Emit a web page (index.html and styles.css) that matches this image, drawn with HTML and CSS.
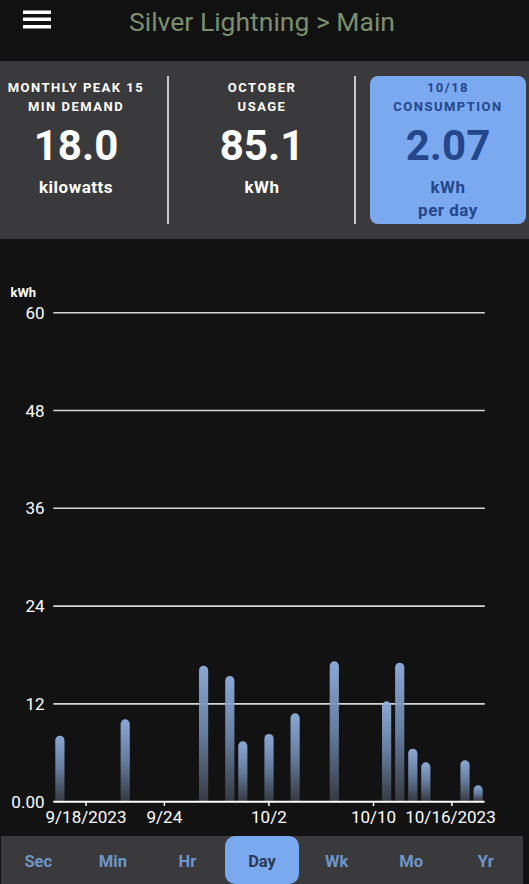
FILE: index.html
```html
<!DOCTYPE html>
<html lang="en">
<head>
<meta charset="utf-8">
<title>Silver Lightning &gt; Main</title>
<link rel="stylesheet" href="styles.css">
</head>
<body>
<div class="app">
  <header class="topbar">
    <svg class="menu" width="28" height="19" viewBox="0 0 28 19" aria-label="Menu">
      <rect x="0" y="0.5" width="28" height="3.5" fill="#ffffff"/>
      <rect x="0" y="7.5" width="28" height="3.5" fill="#ffffff"/>
      <rect x="0" y="15" width="28" height="3.5" fill="#ffffff"/>
    </svg>
    <h1 class="title">Silver Lightning &gt; Main</h1>
  </header>

  <section class="stats">
    <div class="card">
      <div class="label">MONTHLY PEAK 15<br>MIN DEMAND</div>
      <div class="value">18.0</div>
      <div class="unit">kilowatts</div>
    </div>
    <div class="divider"></div>
    <div class="card">
      <div class="label">OCTOBER<br>USAGE</div>
      <div class="value">85.1</div>
      <div class="unit">kWh</div>
    </div>
    <div class="divider"></div>
    <div class="card card-active">
      <div class="label">10/18<br>CONSUMPTION</div>
      <div class="value">2.07</div>
      <div class="unit">kWh<br>per day</div>
    </div>
  </section>

  <section class="chart">
    <svg width="529" height="597" viewBox="0 0 529 597">
      <defs>
        <linearGradient id="barGrad" x1="0" y1="0" x2="0" y2="1">
          <stop offset="0" stop-color="#95b5e6"/>
          <stop offset="0.5" stop-color="#6d86ab"/>
          <stop offset="1" stop-color="#393e47"/>
        </linearGradient>
      </defs>
      <text class="axis-title" x="10.5" y="57.5">kWh</text>
      <g class="grid">
        <line x1="53.3" y1="73.7" x2="484.8" y2="73.7"/>
        <line x1="53.3" y1="171.5" x2="484.8" y2="171.5"/>
        <line x1="53.3" y1="269.3" x2="484.8" y2="269.3"/>
        <line x1="53.3" y1="367.1" x2="484.8" y2="367.1"/>
        <line x1="53.3" y1="464.9" x2="484.8" y2="464.9"/>
      </g>
      <g class="ylabels">
        <text x="44.5" y="79.8">60</text>
        <text x="44.5" y="177.6">48</text>
        <text x="44.5" y="275.4">36</text>
        <text x="44.5" y="373.2">24</text>
        <text x="44.5" y="471">12</text>
        <text x="44.5" y="568.5">0.00</text>
      </g>
      <g class="bars" fill="url(#barGrad)">
        <path d="M55.3 562V501.3A4.6 4.6 0 0 1 64.5 501.3V562Z"/>
        <path d="M120.6 562V484.9A4.6 4.6 0 0 1 129.8 484.9V562Z"/>
        <path d="M199 562V431.3A4.6 4.6 0 0 1 208.2 431.3V562Z"/>
        <path d="M225.2 562V441.6A4.6 4.6 0 0 1 234.4 441.6V562Z"/>
        <path d="M238.2 562V506.9A4.6 4.6 0 0 1 247.4 506.9V562Z"/>
        <path d="M264.4 562V499.6A4.6 4.6 0 0 1 273.6 499.6V562Z"/>
        <path d="M290.5 562V478.9A4.6 4.6 0 0 1 299.7 478.9V562Z"/>
        <path d="M329.7 562V426.9A4.6 4.6 0 0 1 338.9 426.9V562Z"/>
        <path d="M382 562V466.9A4.6 4.6 0 0 1 391.2 466.9V562Z"/>
        <path d="M395.1 562V428.3A4.6 4.6 0 0 1 404.3 428.3V562Z"/>
        <path d="M408.2 562V514.3A4.6 4.6 0 0 1 417.4 514.3V562Z"/>
        <path d="M421.2 562V527.9A4.6 4.6 0 0 1 430.4 527.9V562Z"/>
        <path d="M460.4 562V525.9A4.6 4.6 0 0 1 469.6 525.9V562Z"/>
        <path d="M473.5 562V550.9A4.6 4.6 0 0 1 482.7 550.9V562Z"/>
      </g>
      <line class="axis" x1="53.3" y1="562.7" x2="484.5" y2="562.7"/>
      <g class="ticks">
        <line x1="86" y1="562.7" x2="86" y2="567"/>
        <line x1="164.4" y1="562.7" x2="164.4" y2="567"/>
        <line x1="268.9" y1="562.7" x2="268.9" y2="567"/>
        <line x1="373.5" y1="562.7" x2="373.5" y2="567"/>
        <line x1="451.9" y1="562.7" x2="451.9" y2="567"/>
      </g>
      <g class="xlabels">
        <text x="86" y="583.7">9/18/2023</text>
        <text x="164.4" y="583.7">9/24</text>
        <text x="268.9" y="583.7">10/2</text>
        <text x="373.5" y="583.7">10/10</text>
        <text x="450.5" y="583.7">10/16/2023</text>
      </g>
    </svg>
  </section>

  <nav class="tabs">
    <div class="tab">Sec</div>
    <div class="tab">Min</div>
    <div class="tab">Hr</div>
    <div class="tab tab-active">Day</div>
    <div class="tab">Wk</div>
    <div class="tab">Mo</div>
    <div class="tab">Yr</div>
  </nav>
</div>
</body>
</html>
```
FILE: styles.css
```css
* { box-sizing: border-box; }

html, body {
  margin: 0;
  padding: 0;
  background: #121212;
}

body {
  width: 529px;
  height: 884px;
  overflow: hidden;
  font-family: Roboto, "Liberation Sans", Arial, sans-serif;
  color: #ffffff;
}

.app {
  display: flex;
  flex-direction: column;
  height: 884px;
}

.topbar {
  height: 61px;
  display: flex;
  align-items: flex-start;
  padding-left: 23px;
  background: #111111;
  flex: none;
}

.menu {
  display: block;
  margin-top: 10px;
  flex: none;
}

.title {
  margin: 8.5px 0 0 78px;
  font-size: 26.5px;
  line-height: 26px;
  font-weight: 400;
  color: #7b8f6d;
  white-space: nowrap;
}

.stats {
  height: 178px;
  flex: none;
  background: #3a3a3c;
  padding: 15px 0;
  display: grid;
  grid-template-columns: 152px 32px 156px 30px 156px;
  align-items: stretch;
}

.divider {
  width: 2px;
  justify-self: center;
  background: #c9c9c9;
}

.card {
  display: flex;
  flex-direction: column;
  align-items: center;
  text-align: center;
  padding-top: 1.5px;
  border-radius: 8px;
}

.card-active {
  background: #7ba9f0;
  color: #24468b;
}

.label {
  font-size: 13px;
  line-height: 19px;
  font-weight: 700;
  letter-spacing: 1.5px;
  white-space: nowrap;
}

.value {
  margin-top: 6.5px;
  font-size: 42px;
  line-height: 48px;
  font-weight: 700;
}

.unit {
  margin-top: 5.5px;
  font-size: 17px;
  line-height: 23px;
  font-weight: 700;
  letter-spacing: 0.5px;
}

.chart {
  height: 597px;
  flex: none;
  background: #121212;
}

.chart svg {
  display: block;
}

.axis-title {
  font-family: Roboto, "Liberation Sans", Arial, sans-serif;
  font-size: 13px;
  font-weight: 700;
  fill: #ffffff;
}

.grid line {
  stroke: #d6d6d6;
  stroke-width: 1.6;
}

.bars path {
  opacity: 0.92;
}

.axis {
  stroke: #ffffff;
  stroke-width: 2;
}

.ticks line {
  stroke: #ffffff;
  stroke-width: 1.5;
}

.ylabels text {
  font-family: Roboto, "Liberation Sans", Arial, sans-serif;
  font-size: 17px;
  fill: #ffffff;
  text-anchor: end;
}

.xlabels text {
  font-family: Roboto, "Liberation Sans", Arial, sans-serif;
  font-size: 17px;
  fill: #ffffff;
  text-anchor: middle;
}

.tabs {
  height: 48px;
  width: 522px;
  margin-left: 1px;
  flex: none;
  display: flex;
  background: #3a3a3c;
  overflow: hidden;
}

.tab {
  flex: 1 1 0;
  height: 48px;
  padding-top: 2px;
  display: flex;
  align-items: center;
  justify-content: center;
  font-size: 16.5px;
  font-weight: 700;
  color: #6f95c9;
}

.tab-active {
  background: #7ba9f0;
  color: #2b3a52;
  border-radius: 10px;
}
```
